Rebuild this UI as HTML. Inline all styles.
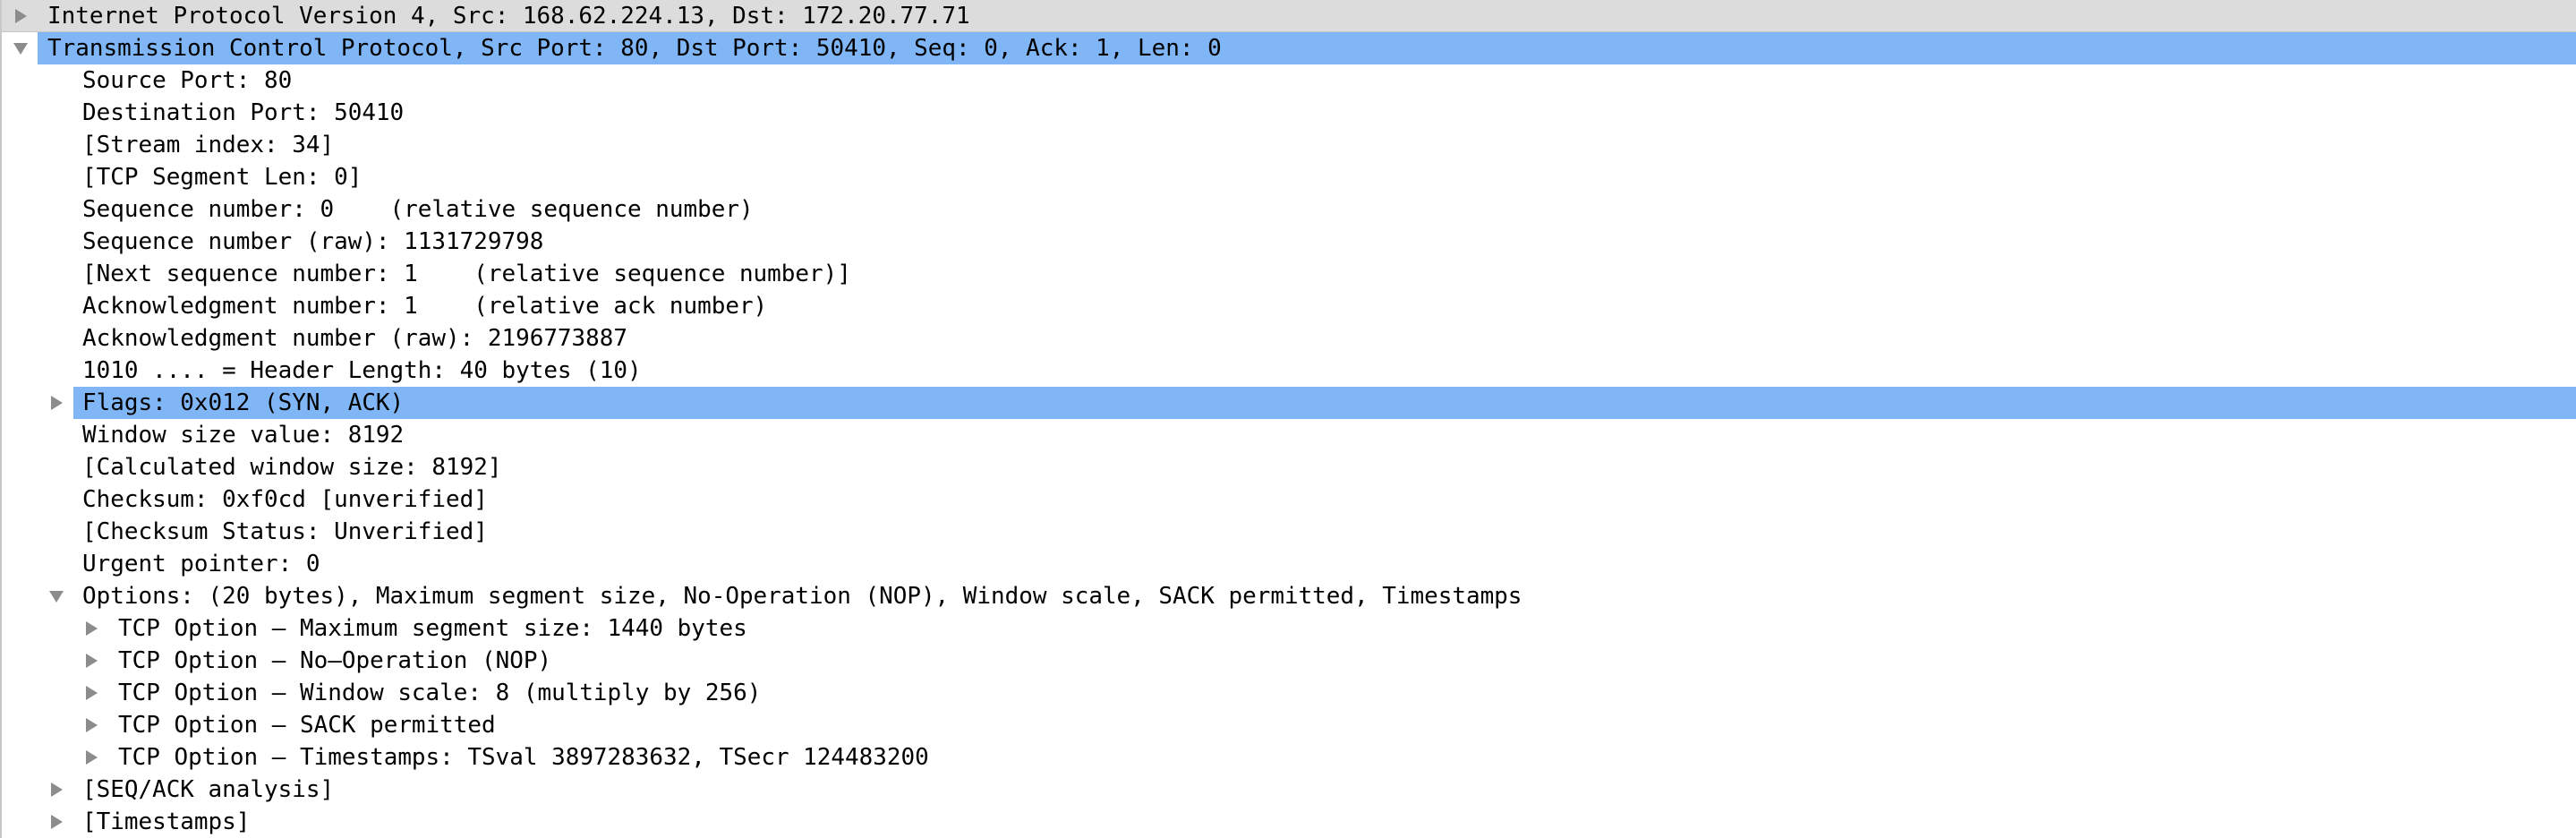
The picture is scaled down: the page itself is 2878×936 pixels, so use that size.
<!DOCTYPE html>
<html><head><meta charset="utf-8"><style>
html,body{margin:0;padding:0;background:#fff;}
body{width:2878px;height:936px;overflow:hidden;position:relative;font-family:"DejaVu Sans Mono","Liberation Mono",monospace;font-size:25.95px;color:#000;}
.vl{position:absolute;left:0;top:0;width:2px;height:936px;background:#c8c8c8;}
.r{position:absolute;left:0;width:2878px;height:36px;line-height:36px;white-space:pre;}
.t{position:absolute;top:0;}
.hl{position:absolute;top:0;height:36px;right:0;background:#80b6f6;}
.ar{position:absolute;width:0;height:0;}
.right{border-top:8px solid transparent;border-bottom:8px solid transparent;border-left:13px solid #8c8c8c;top:10px;}
.down{border-left:8px solid transparent;border-right:8px solid transparent;border-top:13px solid #8c8c8c;top:12px;}
</style></head><body>
<div class="r" style="top:0;background:#dcdcdc;border-bottom:1px solid #c8c8c8;height:35px;"><div class="ar right" style="left:17px"></div><span class="t" style="left:53px">Internet Protocol Version 4, Src: 168.62.224.13, Dst: 172.20.77.71</span></div>
<div class="r" style="top:36px"><div class="hl" style="left:42px"></div><div class="ar down" style="left:15px"></div><span class="t" style="left:53px">Transmission Control Protocol, Src Port: 80, Dst Port: 50410, Seq: 0, Ack: 1, Len: 0</span></div>
<div class="r" style="top:72px"><span class="t" style="left:92px">Source Port: 80</span></div>
<div class="r" style="top:108px"><span class="t" style="left:92px">Destination Port: 50410</span></div>
<div class="r" style="top:144px"><span class="t" style="left:92px">[Stream index: 34]</span></div>
<div class="r" style="top:180px"><span class="t" style="left:92px">[TCP Segment Len: 0]</span></div>
<div class="r" style="top:216px"><span class="t" style="left:92px">Sequence number: 0    (relative sequence number)</span></div>
<div class="r" style="top:252px"><span class="t" style="left:92px">Sequence number (raw): 1131729798</span></div>
<div class="r" style="top:288px"><span class="t" style="left:92px">[Next sequence number: 1    (relative sequence number)]</span></div>
<div class="r" style="top:324px"><span class="t" style="left:92px">Acknowledgment number: 1    (relative ack number)</span></div>
<div class="r" style="top:360px"><span class="t" style="left:92px">Acknowledgment number (raw): 2196773887</span></div>
<div class="r" style="top:396px"><span class="t" style="left:92px">1010 .... = Header Length: 40 bytes (10)</span></div>
<div class="r" style="top:432px"><div class="hl" style="left:82px"></div><div class="ar right" style="left:57px"></div><span class="t" style="left:92px">Flags: 0x012 (SYN, ACK)</span></div>
<div class="r" style="top:468px"><span class="t" style="left:92px">Window size value: 8192</span></div>
<div class="r" style="top:504px"><span class="t" style="left:92px">[Calculated window size: 8192]</span></div>
<div class="r" style="top:540px"><span class="t" style="left:92px">Checksum: 0xf0cd [unverified]</span></div>
<div class="r" style="top:576px"><span class="t" style="left:92px">[Checksum Status: Unverified]</span></div>
<div class="r" style="top:612px"><span class="t" style="left:92px">Urgent pointer: 0</span></div>
<div class="r" style="top:648px"><div class="ar down" style="left:55px"></div><span class="t" style="left:92px">Options: (20 bytes), Maximum segment size, No-Operation (NOP), Window scale, SACK permitted, Timestamps</span></div>
<div class="r" style="top:684px"><div class="ar right" style="left:96px"></div><span class="t" style="left:132px">TCP Option – Maximum segment size: 1440 bytes</span></div>
<div class="r" style="top:720px"><div class="ar right" style="left:96px"></div><span class="t" style="left:132px">TCP Option – No–Operation (NOP)</span></div>
<div class="r" style="top:756px"><div class="ar right" style="left:96px"></div><span class="t" style="left:132px">TCP Option – Window scale: 8 (multiply by 256)</span></div>
<div class="r" style="top:792px"><div class="ar right" style="left:96px"></div><span class="t" style="left:132px">TCP Option – SACK permitted</span></div>
<div class="r" style="top:828px"><div class="ar right" style="left:96px"></div><span class="t" style="left:132px">TCP Option – Timestamps: TSval 3897283632, TSecr 124483200</span></div>
<div class="r" style="top:864px"><div class="ar right" style="left:57px"></div><span class="t" style="left:92px">[SEQ/ACK analysis]</span></div>
<div class="r" style="top:900px"><div class="ar right" style="left:57px"></div><span class="t" style="left:92px">[Timestamps]</span></div>
<div class="vl"></div>
</body></html>
